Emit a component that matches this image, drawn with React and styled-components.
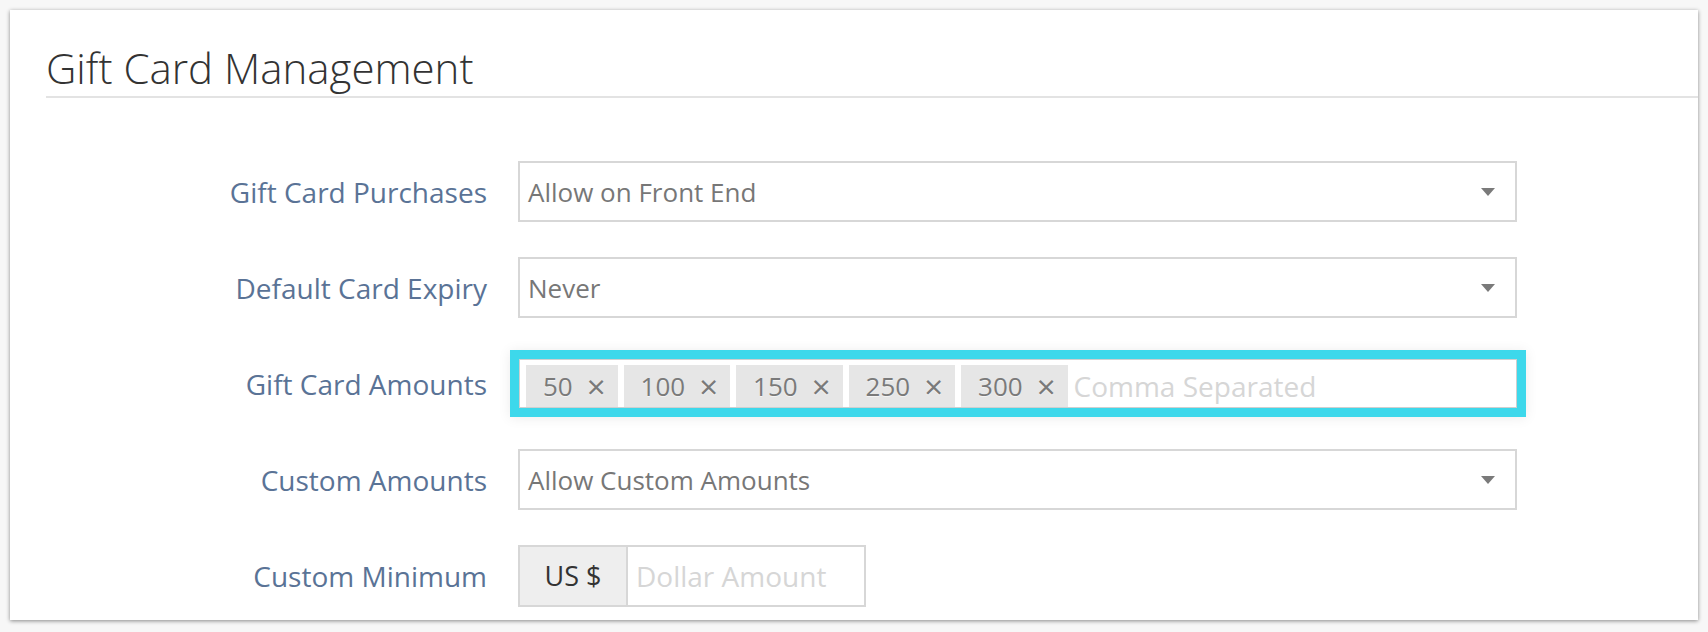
import React from 'react';
import styled, { createGlobalStyle } from 'styled-components';

const GlobalStyle = createGlobalStyle`
  body {
    margin : 0;
    background-color : #f7f7f7;
    font-family : "Open Sans", "Liberation Sans", sans-serif;
  }
`;

const Page = styled.div`
  padding : 10px 10px 10px 10px;
`;

const Panel = styled.div`
  width : 1688px;
  background-color : #ffffff;
  box-shadow : 0 1px 4px rgba(0, 0, 0, 0.45);
  padding-bottom : 14px;
`;

const Header = styled.div`
  margin-left : 36px;
  padding-top : 33px;
  padding-bottom : 3px;
  border-bottom : 2px solid #e3e3e3;
`;

const Title = styled.h1`
  margin : 0;
  font-size : 42px;
  line-height : 50px;
  font-weight : 300;
  color : #333333;
`;

const Form = styled.div`
  padding-top : 63px;
`;

const Row = styled.div`
  display : flex;
  align-items : center;
  height : 61px;
  margin-bottom : 35px;

  &:last-child {
    margin-bottom : 0;
  }
`;

const Label = styled.div`
  width : 477px;
  margin-right : 31px;
  text-align : right;
  font-size : 28px;
  color : #5a7396;
`;

const Select = styled.div`
  box-sizing : border-box;
  width : 999px;
  height : 61px;
  border : 2px solid #d7d7d7;
  padding : 0 20px 0 8px;
  display : flex;
  align-items : center;
  justify-content : space-between;
  font-size : 26px;
  color : #777777;
`;

const Caret = styled.span`
  width : 0;
  height : 0;
  border-left : 7px solid transparent;
  border-right : 7px solid transparent;
  border-top : 8px solid #7a7a7a;
`;

const TagField = styled.div`
  box-sizing : border-box;
  width : 998px;
  height : 49px;
  margin-left : 1px;
  border : 1px solid #cfcfcf;
  box-shadow : 0 0 0 9px #3dd8eb, 0 1px 12px 9px rgba(0, 0, 0, 0.08);
  padding : 5px 6px 0 6px;
  display : flex;
  gap : 6px;
`;

const Chip = styled.span`
  height : 42px;
  display : flex;
  align-items : center;
  padding : 0 12px 0 17px;
  background-color : #e6e6e6;
  font-size : 26px;
  color : #7a7a7a;
  text-shadow : 0 1px 0 rgba(255, 255, 255, 0.6);
`;

const Remove = styled.span`
  margin-left : 14px;
  font-size : 33px;
  line-height : 1;
`;

const Placeholder = styled.span`
  height : 42px;
  display : flex;
  align-items : center;
  font-size : 28px;
  color : #d6d6d6;
`;

const InputGroup = styled.div`
  display : flex;
  height : 62px;
`;

const Addon = styled.div`
  box-sizing : border-box;
  width : 110px;
  border : 2px solid #d7d7d7;
  background-color : #eeeeee;
  display : flex;
  align-items : center;
  justify-content : center;
  font-size : 27px;
  color : #333333;
`;

const AmountInput = styled.div`
  box-sizing : border-box;
  width : 238px;
  border : 2px solid #d7d7d7;
  border-left : none;
  padding-left : 8px;
  display : flex;
  align-items : center;
  font-size : 28px;
  color : #d6d6d6;
`;

const amounts = ['50', '100', '150', '250', '300'];

const App = () => {
  return (
    <Page>
      <GlobalStyle />
      <Panel>
        <Header>
          <Title>Gift Card Management</Title>
        </Header>
        <Form>
          <Row>
            <Label>Gift Card Purchases</Label>
            <Select>Allow on Front End<Caret /></Select>
          </Row>
          <Row>
            <Label>Default Card Expiry</Label>
            <Select>Never<Caret /></Select>
          </Row>
          <Row>
            <Label>Gift Card Amounts</Label>
            <TagField>
              {amounts.map(a => (
                <Chip key={a}>{a}<Remove>×</Remove></Chip>
              ))}
              <Placeholder>Comma Separated</Placeholder>
            </TagField>
          </Row>
          <Row>
            <Label>Custom Amounts</Label>
            <Select>Allow Custom Amounts<Caret /></Select>
          </Row>
          <Row>
            <Label>Custom Minimum</Label>
            <InputGroup>
              <Addon>US $</Addon>
              <AmountInput>Dollar Amount</AmountInput>
            </InputGroup>
          </Row>
        </Form>
      </Panel>
    </Page>
  );
};

export default App;
